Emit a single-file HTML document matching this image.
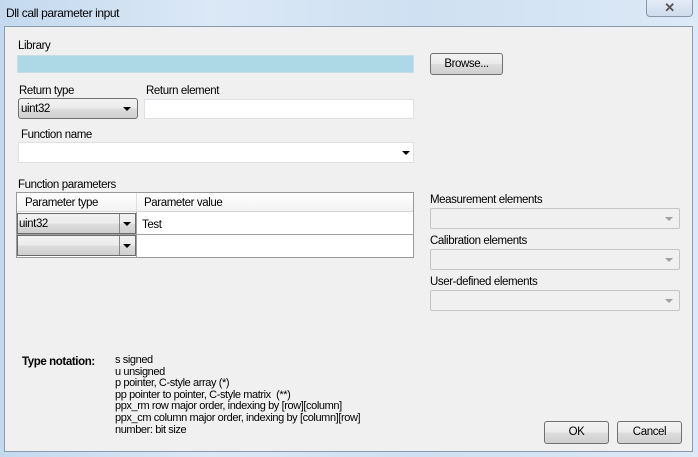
<!DOCTYPE html>
<html><head><style>
*{box-sizing:border-box;margin:0;padding:0}
body{width:698px;height:457px;overflow:hidden;background:linear-gradient(90deg,#c4d9ef,#dbe8f6 30%,#cfe0f2 60%,#dce9f6);font-family:"Liberation Sans",sans-serif;font-size:11.5px;color:#000;position:relative;letter-spacing:-0.4px}
.a{position:absolute}
.client{position:absolute;left:4px;top:26px;width:689px;height:426px;background:#f0f0f0;border:1px solid #8a9bb0}
.inp{position:absolute;background:#fff;border:1px solid #abadb3;border-top-color:#abadb3}
.btn{position:absolute;border:1px solid #707070;border-radius:3px;background:linear-gradient(#f2f2f2,#ebebeb 50%,#dddddd 51%,#cfcfcf);text-align:center}
.cmb{position:absolute;border:1px solid #707070;border-radius:3px;background:linear-gradient(#f2f2f2,#ebebeb 50%,#dddddd 51%,#cfcfcf)}
.arr{position:absolute;width:0;height:0;border-left:4px solid transparent;border-right:4px solid transparent;border-top:4px solid #000}
.dis{position:absolute;border:1px solid #c5c5c5;border-radius:2px;background:#f0f0f0}
.dis .arr{border-top-color:#a0a0a0}
</style></head><body>
<div class="a" style="left:6px;top:6px;font-size:12px">Dll call parameter input</div>
<div class="a" style="left:646px;top:-3px;width:47px;height:20px;border:1px solid #8896aa;border-radius:4px;background:linear-gradient(#e6eef8,#cfdcec);text-align:center;font-size:13px;color:#555;font-weight:bold;line-height:20px">✕</div>
<div class="client"></div>

<div class="a" style="left:18px;top:40px">Library</div>
<div class="inp" style="left:17px;top:55px;width:397px;height:18px;background:#add8e6;border-color:#c9dde6"></div>
<div class="btn" style="left:430px;top:53px;width:73px;height:22px;line-height:20px">Browse...</div>

<div class="a" style="left:19px;top:85px">Return type</div>
<div class="cmb" style="left:18px;top:98px;width:120px;height:21px"><span class="a" style="left:2px;top:4px">uint32</span><div class="arr" style="left:104px;top:8px"></div></div>
<div class="a" style="left:146px;top:85px">Return element</div>
<div class="inp" style="left:144px;top:99px;width:270px;height:20px;border-color:#dde0e4"></div>

<div class="a" style="left:21px;top:129px">Function name</div>
<div class="inp" style="left:18px;top:142px;width:396px;height:21px;border-color:#dde0e4"><div class="arr" style="left:383px;top:8px"></div></div>

<div class="a" style="left:18px;top:179px">Function parameters</div>
<div class="a" style="left:16px;top:192px;width:398px;height:66px;background:#fff;border:1px solid #999"></div>
<div class="a" style="left:17px;top:193px;width:396px;height:19px;background:linear-gradient(#fff,#f3f3f3);border-bottom:1px solid #d5d5d5"></div>
<div class="a" style="left:136px;top:193px;width:1px;height:19px;background:#e0e0e0"></div>
<div class="a" style="left:25px;top:197px">Parameter type</div>
<div class="a" style="left:144px;top:197px">Parameter value</div>
<div class="a" style="left:17px;top:234px;width:396px;height:1px;background:#a0a0a0"></div>
<div class="a" style="left:136px;top:212px;width:1px;height:45px;background:#a0a0a0"></div>
<div class="cmb" style="left:17px;top:213px;width:119px;height:21px;border-radius:0;border-color:#6a6a6a"><span class="a" style="left:1px;top:4px">uint32</span><div class="a" style="left:101px;top:0;width:1px;height:19px;background:#888"></div><div class="arr" style="left:105px;top:8px"></div></div>
<div class="a" style="left:142px;top:219px">Test</div>
<div class="cmb" style="left:17px;top:235px;width:119px;height:21px;border-radius:0;border-color:#6a6a6a"><div class="a" style="left:101px;top:0;width:1px;height:19px;background:#888"></div><div class="arr" style="left:105px;top:8px"></div></div>

<div class="a" style="left:430px;top:194px">Measurement elements</div>
<div class="dis" style="left:430px;top:208px;width:250px;height:21px"><div class="arr" style="left:234px;top:8px"></div></div>
<div class="a" style="left:430px;top:235px">Calibration elements</div>
<div class="dis" style="left:430px;top:249px;width:250px;height:21px"><div class="arr" style="left:234px;top:8px"></div></div>
<div class="a" style="left:430px;top:276px">User-defined elements</div>
<div class="dis" style="left:430px;top:290px;width:250px;height:21px"><div class="arr" style="left:234px;top:8px"></div></div>

<div class="a" style="left:22px;top:356px;font-weight:bold">Type notation:</div>
<div class="a" style="left:115px;top:355px;line-height:11.6px;font-size:11px">s signed<br>u unsigned<br>p pointer, C-style array (*)<br>pp pointer to pointer, C-style matrix &nbsp;(**)<br>ppx_rm row major order, indexing by [row][column]<br>ppx_cm column major order, indexing by [column][row]<br>number: bit size</div>

<div class="btn" style="left:544px;top:421px;width:65px;height:23px;line-height:21px">OK</div>
<div class="btn" style="left:617px;top:421px;width:65px;height:23px;line-height:21px">Cancel</div>
</body></html>
